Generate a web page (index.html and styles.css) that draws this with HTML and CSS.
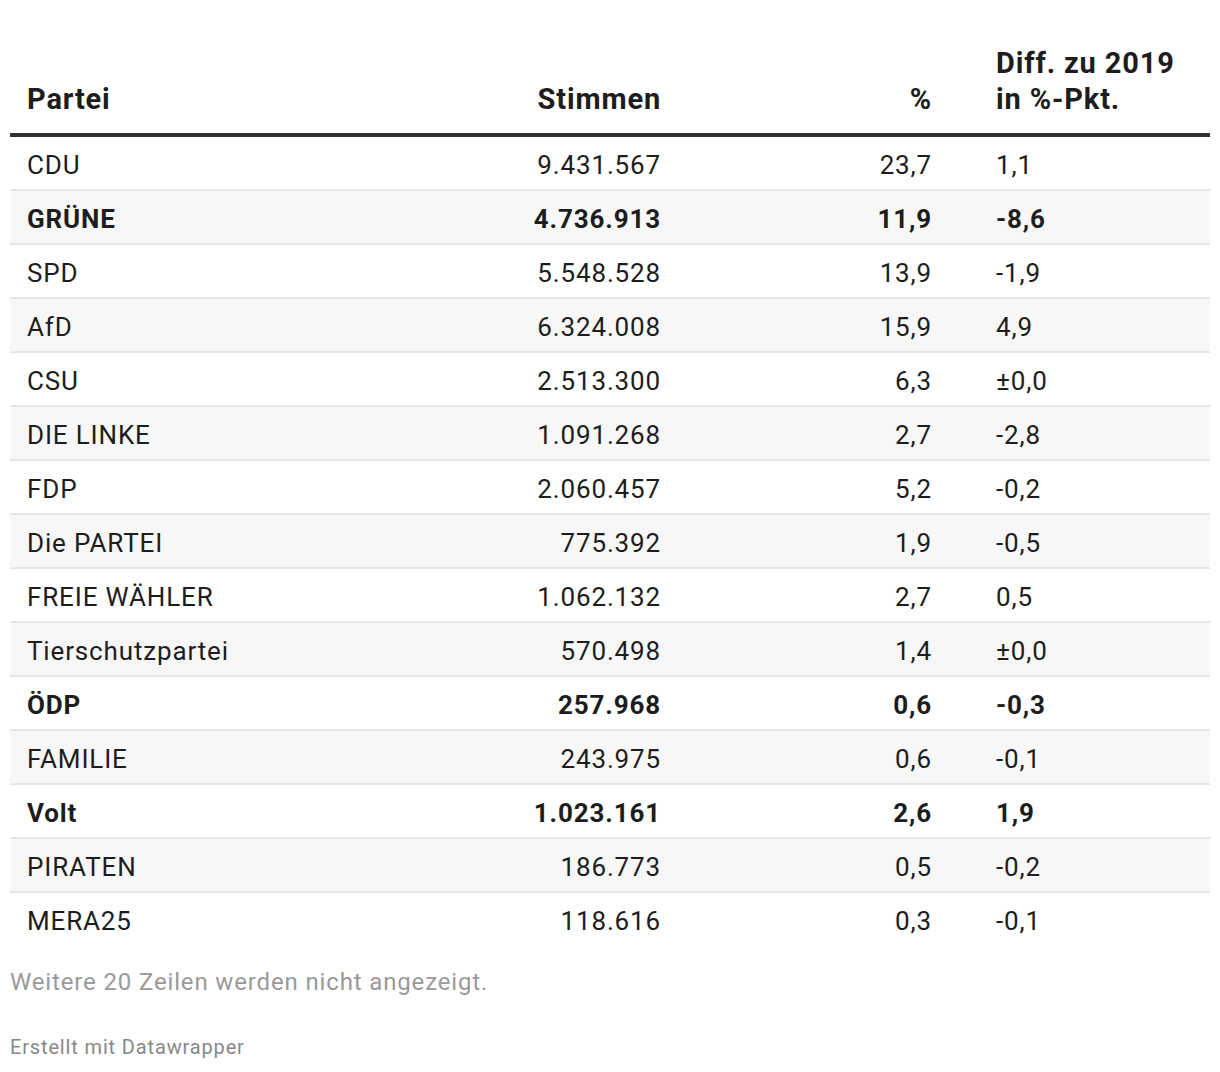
FILE: index.html
```html
<!DOCTYPE html>
<html lang="de">
<head>
<meta charset="utf-8">
<title>Tabelle</title>
<link rel="stylesheet" href="styles.css">
</head>
<body>
<div class="chart">
  <table class="results">
    <colgroup>
      <col class="c-party">
      <col class="c-votes">
      <col class="c-pct">
      <col class="c-diff">
    </colgroup>
    <thead>
      <tr>
        <th class="left">Partei</th>
        <th class="num">Stimmen</th>
        <th class="num">%</th>
        <th class="diff">Diff. zu 2019<br>in %-Pkt.</th>
      </tr>
    </thead>
    <tbody>
      <tr><td>CDU</td><td class="num">9.431.567</td><td class="num">23,7</td><td class="diff">1,1</td></tr>
      <tr class="bold"><td>GRÜNE</td><td class="num">4.736.913</td><td class="num">11,9</td><td class="diff">-8,6</td></tr>
      <tr><td>SPD</td><td class="num">5.548.528</td><td class="num">13,9</td><td class="diff">-1,9</td></tr>
      <tr><td>AfD</td><td class="num">6.324.008</td><td class="num">15,9</td><td class="diff">4,9</td></tr>
      <tr><td>CSU</td><td class="num">2.513.300</td><td class="num">6,3</td><td class="diff">±0,0</td></tr>
      <tr><td>DIE LINKE</td><td class="num">1.091.268</td><td class="num">2,7</td><td class="diff">-2,8</td></tr>
      <tr><td>FDP</td><td class="num">2.060.457</td><td class="num">5,2</td><td class="diff">-0,2</td></tr>
      <tr><td>Die PARTEI</td><td class="num">775.392</td><td class="num">1,9</td><td class="diff">-0,5</td></tr>
      <tr><td>FREIE WÄHLER</td><td class="num">1.062.132</td><td class="num">2,7</td><td class="diff">0,5</td></tr>
      <tr><td>Tierschutzpartei</td><td class="num">570.498</td><td class="num">1,4</td><td class="diff">±0,0</td></tr>
      <tr class="bold"><td>ÖDP</td><td class="num">257.968</td><td class="num">0,6</td><td class="diff">-0,3</td></tr>
      <tr><td>FAMILIE</td><td class="num">243.975</td><td class="num">0,6</td><td class="diff">-0,1</td></tr>
      <tr class="bold"><td>Volt</td><td class="num">1.023.161</td><td class="num">2,6</td><td class="diff">1,9</td></tr>
      <tr><td>PIRATEN</td><td class="num">186.773</td><td class="num">0,5</td><td class="diff">-0,2</td></tr>
      <tr><td>MERA25</td><td class="num">118.616</td><td class="num">0,3</td><td class="diff">-0,1</td></tr>
    </tbody>
  </table>
  <p class="more">Weitere 20 Zeilen werden nicht angezeigt.</p>
  <p class="credit">Erstellt mit Datawrapper</p>
</div>
</body>
</html>
```
FILE: styles.css
```css
html, body {
  margin: 0;
  padding: 0;
  background: #ffffff;
}
body {
  font-family: Roboto, "Liberation Sans", sans-serif;
  color: #1d1d1d;
  letter-spacing: 0.85px;
}
.chart {
  padding: 35px 10px 0 10px;
}
.results {
  width: 1200px;
  border-collapse: collapse;
  table-layout: fixed;
  font-size: 26px;
}
.c-party { width: 340px; }
.c-votes { width: 326px; }
.c-pct { width: 271px; }
.c-diff { width: 263px; }

.results th {
  font-size: 29px;
  font-weight: 700;
  line-height: 36px;
  vertical-align: bottom;
  padding: 10px 16px 16px 17px;
  border-bottom: 4px solid #333333;
  text-align: left;
}
.results td {
  line-height: 36px;
  padding: 10px 16px 6px 17px;
  border-bottom: 2px solid #e6e6e6;
}
.results tbody tr:nth-child(even) td {
  background: #f7f7f7;
}
.results tbody tr:last-child td {
  border-bottom: none;
}
.results .num {
  text-align: right;
  padding-right: 15px;
}
.results .diff {
  text-align: left;
  padding-left: 49px;
}
.results tr.bold td {
  font-weight: 700;
}
.more {
  margin: 22px 0 0 0;
  font-size: 24px;
  line-height: 30px;
  color: #9a9a9a;
}
.credit {
  margin: 38px 0 0 0;
  font-size: 20px;
  line-height: 24px;
  color: #888888;
}
```
